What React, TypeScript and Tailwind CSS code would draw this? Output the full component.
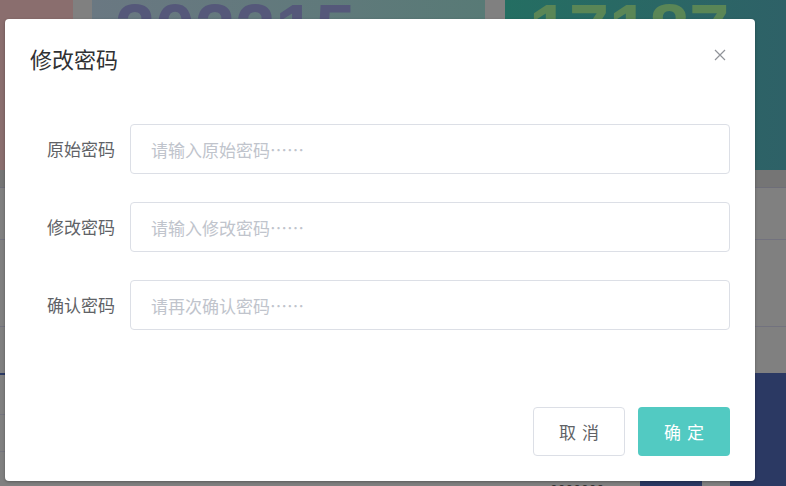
import React from "react";

const font = { fontFamily: '"Noto Sans CJK SC", "Noto Sans", sans-serif' };

function Field({ label, placeholder }: { label: string; placeholder: string }) {
  return (
    <div className="flex items-center h-[50px]">
      <label className="shrink-0 w-[100px] pr-[15px] text-right text-[17px] text-[#606266]">{label}</label>
      <input
        type="password"
        placeholder={placeholder}
        className="min-w-0 flex-1 h-[50px] rounded-[4px] border border-[#dcdfe6] bg-white px-[20px] text-[17px] text-[#606266] outline-none placeholder:text-[#c0c4cc]"
        style={font}
      />
    </div>
  );
}

export default function App() {
  return (
    <div className="relative w-[786px] h-[486px] overflow-hidden bg-[#808080]" style={font}>
      {/* dimmed page behind the dialog */}
      <div className="flex flex-col w-full h-full">
        <div className="flex h-[170px] shrink-0">
          <div className="w-[73px] bg-[#8a6e6e]" />
          <div className="w-[19px] bg-[#808080]" />
          <div className="w-[393px] bg-gradient-to-r from-[#6a7882] to-[#587a76] pl-[23px] overflow-hidden">
            <div className="-mt-[6px] text-[72px] leading-none font-bold text-[#55587a]" style={{ fontFamily: '"Liberation Sans", Arial, sans-serif' }}>
              202215
            </div>
          </div>
          <div className="w-[20px] bg-[#808080]" />
          <div className="flex-1 bg-gradient-to-r from-[#246e62] to-[#2e6167] pl-[24px] overflow-hidden">
            <div className="-mt-[6px] text-[72px] leading-none font-bold text-[#5a8656]" style={{ fontFamily: '"Liberation Sans", Arial, sans-serif' }}>
              17187
            </div>
          </div>
        </div>
        <div className="flex flex-col h-[203px] shrink-0">
          <div className="h-[18px] bg-[#757575] border-b border-[#6e6e78]" />
          <div className="h-[52px] border-b border-[#72727e]" />
          <div className="h-[87px] border-b border-[#72727e]" />
          <div className="flex-1" />
        </div>
        <div className="flex flex-1">
          <div className="w-[640px] flex flex-col border-t-2 border-[#2b3963]">
            <div className="h-[40px] border-b border-[#75757f]" />
            <div className="h-[37px] border-b border-[#75757f]" />
            <div className="flex-1 pl-[550px] text-[14px] text-[#333] leading-none pt-[30px]">0000000</div>
          </div>
          <div className="w-[62px] bg-[#2b3963]" />
          <div className="w-[28px]" />
          <div className="flex-1 bg-[#2b3963]" />
        </div>
      </div>

      {/* dialog */}
      <div className="absolute left-[5px] top-[19px] w-[750px] h-[462px] rounded-[4px] bg-white shadow-[0_1px_3px_rgba(0,0,0,0.3)] flex flex-col">
        <div className="pt-[25px] px-[25px]">
          <h2 className="text-[22px] leading-[28px] text-[#303133]">修改密码</h2>
        </div>
        <button className="absolute top-[30px] right-[29px] w-[12px] h-[12px]" aria-label="close">
          <svg viewBox="0 0 12 12" width="12" height="12" fill="none" stroke="#909399" strokeWidth="1.2">
            <path d="M1 1L11 11M11 1L1 11" />
          </svg>
        </button>
        <div className="flex flex-col gap-[28px] pt-[52px] pl-[25px] pr-[25px]">
          <Field label="原始密码" placeholder="请输入原始密码……" />
          <Field label="修改密码" placeholder="请输入修改密码……" />
          <Field label="确认密码" placeholder="请再次确认密码……" />
        </div>
        <div className="mt-auto flex justify-end gap-[13px] px-[25px] pb-[25px]">
          <button className="w-[92px] h-[49px] rounded-[4px] border border-[#dcdfe6] bg-white text-[17px] text-[#606266] tracking-[6px] pl-[6px]">
            取消
          </button>
          <button className="w-[92px] h-[49px] rounded-[4px] bg-[#52cac2] text-[17px] text-white tracking-[6px] pl-[6px]">
            确定
          </button>
        </div>
      </div>
    </div>
  );
}
